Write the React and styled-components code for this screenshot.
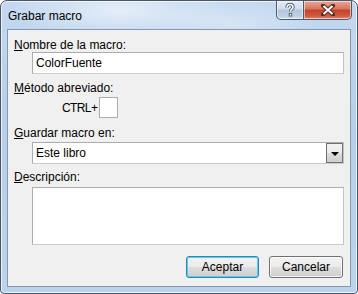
import React from "react"
import styled, { createGlobalStyle } from "styled-components"

const GlobalStyle = createGlobalStyle`
  body {
    margin: 0;
    background: #ffffff;
    font-family: "Liberation Sans", Arial, sans-serif;
    font-size: 12px;
    color: #000;
  }
`

const Window = styled.div`
  box-sizing: border-box;
  width: 358px;
  height: 294px;
  border: 1px solid #4a5566;
  border-radius: 7px 7px 4px 4px;
  padding: 0 6px 6px 6px;
  display: flex;
  flex-direction: column;
  background:
    radial-gradient(ellipse 160px 40px at 120px 10px, rgba(255, 255, 255, 0.55), rgba(255, 255, 255, 0) 70%),
    radial-gradient(ellipse 120px 30px at 230px 22px, rgba(255, 255, 255, 0.35), rgba(255, 255, 255, 0) 70%),
    linear-gradient(180deg, #c4d9f0 0%, #b7cfea 40%, #bcd3ec 100%);
  box-shadow: inset 0 0 0 1px rgba(255, 255, 255, 0.7);
`

const TitleBar = styled.div`
  flex: 0 0 28px;
  display: flex;
  align-items: flex-start;
  justify-content: space-between;
`

const Title = styled.span`
  margin: 8px 0 0 1px;
  font-size: 12px;
  color: #000;
`

const Controls = styled.div`
  display: flex;
  margin-right: -1px;
`

const CtrlButton = styled.div`
  box-sizing: border-box;
  height: 19px;
  width: ${p => p.$w}px;
  display: flex;
  align-items: center;
  justify-content: center;
  border: 1px solid #4c596c;
  border-top: none;
  border-radius: ${p => (p.$close ? "0 0 5px 0" : "0 0 0 5px")};
  border-left: ${p => (p.$close ? "none" : "1px solid #4c596c")};
  background: ${p =>
    p.$close
      ? "linear-gradient(180deg, #e8a898 0%, #d6735f 45%, #c4412a 50%, #cf5b40 85%, #e2947d 100%)"
      : "linear-gradient(180deg, #e4edf7 0%, #cfdcea 45%, #b4c6da 50%, #bfd0e2 85%, #d6e3f0 100%)"};
  box-shadow: inset 0 0 0 1px rgba(255, 255, 255, 0.55);
`

const Client = styled.div`
  flex: 1 1 auto;
  min-height: 0;
  border: 1px solid #8598b2;
  background: #f0f0f0;
  padding: 8px 6px 8px 6px;
  display: flex;
  flex-direction: column;
`

const Label = styled.div`
  height: 14px;
  line-height: 14px;
  margin-top: ${p => p.$mt || 0}px;
`

const Key = styled.span`
  text-decoration: underline;
`

const Field = styled.div`
  box-sizing: border-box;
  flex-shrink: 0;
  margin: ${p => p.$mt || 0}px 0 0 18px;
  height: ${p => p.$h || 22}px;
  border: 1px solid #abadb3;
  border-right-color: #c2c4c8;
  border-bottom-color: #c9cbcf;
  background: #fff;
  display: flex;
  align-items: center;
  padding-left: 3px;
`

const SelectBox = styled(Field)`
  padding-right: 0;
  justify-content: space-between;
`

const DropButton = styled.div`
  box-sizing: border-box;
  width: 17px;
  height: 20px;
  border: 1px solid #707070;
  background: linear-gradient(180deg, #f2f2f2 0%, #ebebeb 50%, #dddddd 51%, #cfcfcf 100%);
  display: flex;
  align-items: center;
  justify-content: center;
`

const Triangle = styled.div`
  width: 0;
  height: 0;
  border-left: 4px solid transparent;
  border-right: 4px solid transparent;
  border-top: 4px solid #000;
  margin-top: 1px;
`

const ShortcutRow = styled.div`
  display: flex;
  align-items: center;
  margin: 2px 0 0 48px;
  gap: 2px;
`

const ShortcutText = styled.span`
  width: 35px;
  letter-spacing: -0.6px;
  white-space: nowrap;
`

const KeyBox = styled.div`
  box-sizing: border-box;
  width: 19px;
  height: 21px;
  border: 1px solid #abadb3;
  background: #fff;
`

const ButtonRow = styled.div`
  display: flex;
  justify-content: flex-end;
  gap: 10px;
  margin-top: 11px;
  padding-right: 1px;
`

const Button = styled.button`
  box-sizing: border-box;
  width: ${p => p.$w}px;
  height: 22px;
  font-family: "Liberation Sans", Arial, sans-serif;
  font-size: 12px;
  color: #000;
  border-radius: 3px;
  border: 1px solid ${p => (p.$default ? "#3c7fb1" : "#707070")};
  background: linear-gradient(180deg, #f2f2f2 0%, #ebebeb 50%, #dddddd 51%, #cfcfcf 100%);
  box-shadow: inset 0 0 0 1px ${p => (p.$default ? "#48d3fb" : "rgba(255,255,255,0.8)")};
  padding: 0;
`

const HelpIcon = () => (
  <svg width="12" height="14" viewBox="0 0 12 14">
    <path
      d="M3 4.5 C3 2.5 4.5 1.5 6 1.5 C7.8 1.5 9 2.6 9 4.2 C9 6 6.5 6.4 6.5 8.5"
      fill="none"
      stroke="#3b4a5e"
      strokeWidth="3.2"
    />
    <path
      d="M3 4.5 C3 2.5 4.5 1.5 6 1.5 C7.8 1.5 9 2.6 9 4.2 C9 6 6.5 6.4 6.5 8.5"
      fill="none"
      stroke="#fff"
      strokeWidth="1.6"
    />
    <rect x="4.8" y="10" width="3.4" height="3.4" fill="#3b4a5e" />
    <rect x="5.6" y="10.8" width="1.8" height="1.8" fill="#fff" />
  </svg>
)

const CloseIcon = () => (
  <svg width="14" height="12" viewBox="0 0 14 12">
    <path d="M2 1.5 L12 10.5 M12 1.5 L2 10.5" stroke="#5a2a22" strokeWidth="4" strokeLinecap="square" />
    <path d="M2.5 2 L11.5 10 M11.5 2 L2.5 10" stroke="#fff" strokeWidth="2" />
  </svg>
)

export default function App() {
  return (
    <>
      <GlobalStyle />
      <Window>
        <TitleBar>
          <Title>Grabar macro</Title>
          <Controls>
            <CtrlButton $w={28}>
              <HelpIcon />
            </CtrlButton>
            <CtrlButton $w={48} $close>
              <CloseIcon />
            </CtrlButton>
          </Controls>
        </TitleBar>
        <Client>
          <Label>
            <Key>N</Key>ombre de la macro:
          </Label>
          <Field>ColorFuente</Field>
          <Label $mt={7}>
            <Key>M</Key>étodo abreviado:
          </Label>
          <ShortcutRow>
            <ShortcutText>CTRL+</ShortcutText>
            <KeyBox />
          </ShortcutRow>
          <Label $mt={8}>
            <Key>G</Key>uardar macro en:
          </Label>
          <SelectBox $mt={2}>
            <span>Este libro</span>
            <DropButton>
              <Triangle />
            </DropButton>
          </SelectBox>
          <Label $mt={6}>
            <Key>D</Key>escripción:
          </Label>
          <Field $mt={3} $h={58} />
          <ButtonRow>
            <Button $w={73} $default>
              Aceptar
            </Button>
            <Button $w={74}>Cancelar</Button>
          </ButtonRow>
        </Client>
      </Window>
    </>
  )
}
